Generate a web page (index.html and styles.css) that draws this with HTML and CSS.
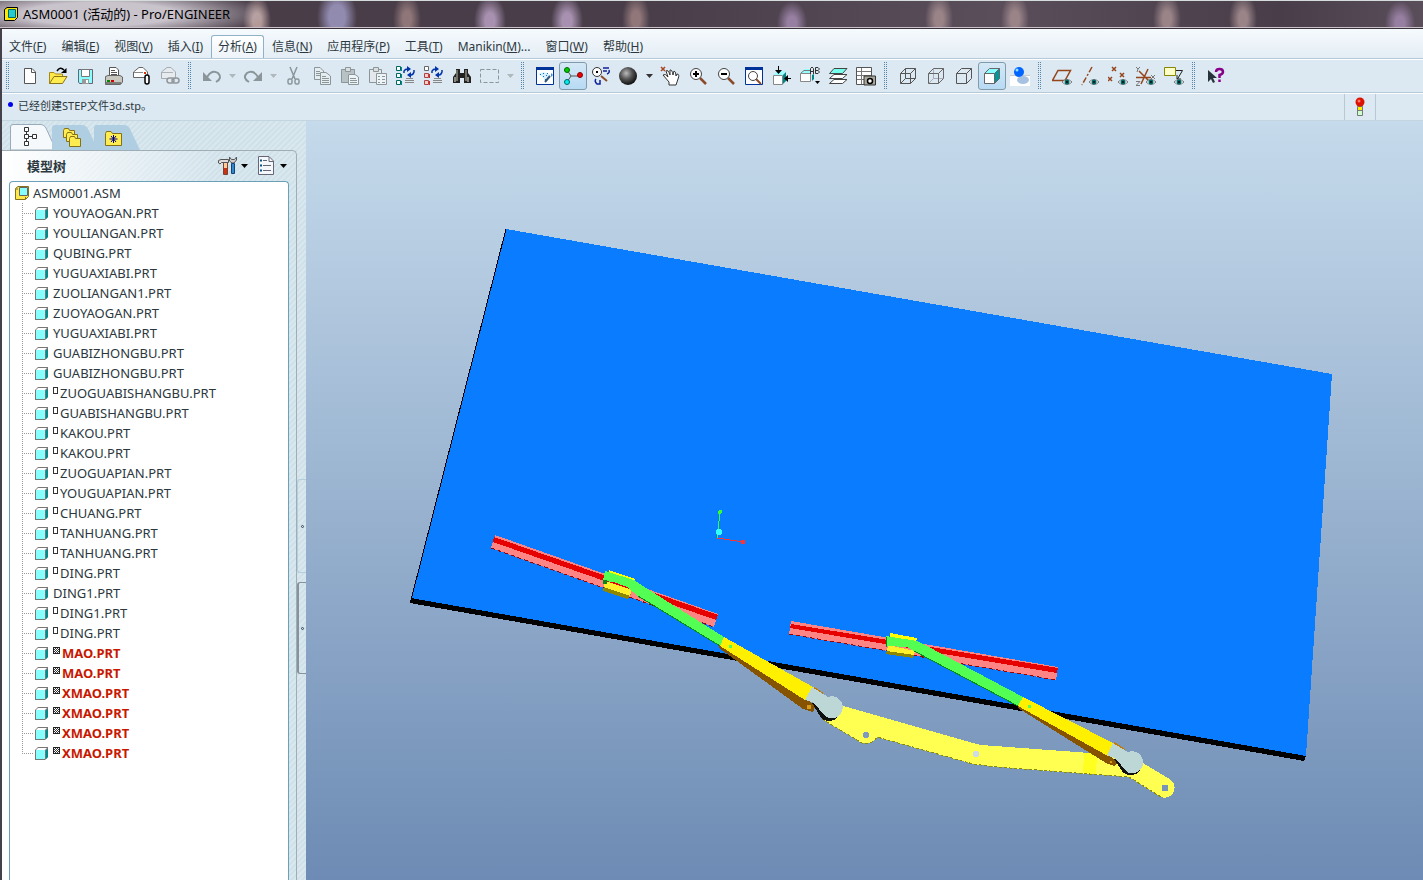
FILE: index.html
```
<!DOCTYPE html>
<html lang="zh-CN">
	<head>
		<meta charset="utf-8">
		<title>ASM0001 (活动的) - Pro/ENGINEER</title>
		<meta name="viewport" content="width=device-width, initial-scale=1.0">

		<link rel="stylesheet" href="styles.css">
	</head>
	<body>

	<!-- shapes used more than once -->
	<svg class="defs" aria-hidden="true">
		<symbol id="part" viewBox="0 0 13 13">
			<path d="M3 0H13V10L10 13H0V3z" fill="#777"/>
			<path d="M3 1H12L10 3H1z" fill="#fff"/>
			<path d="M11 4L13 2V10L11 12z" fill="#008a8a"/>
			<path d="M1 3H10V12H1z" fill="#8ff"/>
		</symbol>
		<symbol id="asm" viewBox="0 0 14 14">
			<path d="M3 .5H13.500V10.500L10.500 13.500H.5V2.500z" fill="#ffe84a" stroke="#86701a"/>
			<path d="M4.500 1.500H12.500V9.500H4.500z" fill="#8ff" stroke="#666"/>
			<path d="M10.500 11V13M1 3H3" stroke="#86701a"/>
		</symbol>
		<symbol id="eye" viewBox="0 0 10 6">
			<path d="M0 3Q5 -2 10 3Q5 8 0 3z" fill="#fff" stroke="#777"/>
			<circle cx="5" cy="3" r="2.500" fill="#066"/><path d="M4 2H6V4H4z" fill="#022"/>
		</symbol>
		<symbol id="lens" viewBox="0 0 20 20">
			<path d="M12 12L18 18" stroke="#8b4a2b" stroke-width="2.500"/>
			<circle cx="8" cy="8" r="5.500" fill="#fff" stroke="#444"/>
		</symbol>
		<symbol id="regen" viewBox="0 0 12 12">
			<path d="M1 7V5Q2 3 5 3" fill="none" stroke="#03a" stroke-width="1.500"/><path d="M4 0L8 3L4 6z" fill="#03a"/>
			<path d="M11 4V6Q10 9 8 9" fill="none" stroke="#03a" stroke-width="1.500"/><path d="M8 6L4 9L8 12z" fill="#03a"/>
		</symbol>
	</svg>

	<header class="titlebar">
		<svg width="14" height="14"><path d="M3 .5H13.500V10.500L10.500 13.500H.5V2.500z" fill="#ffe800" stroke="#000"/><path d="M4.500 2.500H11.500V10.500H4.500z" fill="#2cc" stroke="#066"/></svg>
		<h1>ASM0001 (活动的) - Pro/ENGINEER</h1>
	</header>

	<div class="window">
		<nav class="menubar">
			<button type="button">文件(<u>F</u>)</button>
			<button type="button">编辑(<u>E</u>)</button>
			<button type="button">视图(<u>V</u>)</button>
			<button type="button">插入(<u>I</u>)</button>
			<button type="button" class="active">分析(<u>A</u>)</button>
			<button type="button">信息(<u>N</u>)</button>
			<button type="button">应用程序(<u>P</u>)</button>
			<button type="button">工具(<u>T</u>)</button>
			<button type="button">Manikin(<u>M</u>)...</button>
			<button type="button">窗口(<u>W</u>)</button>
			<button type="button">帮助(<u>H</u>)</button>
		</nav>

		<div class="toolbar">
			<div class="group">
				<button type="button" aria-label="New"><svg><path d="M4.500 2.500H12L15.500 6V17.500H4.500z" fill="#fff" stroke="#555"/><path d="M11.500 2.500V6.500H15.500" fill="none" stroke="#555"/></svg></button>
				<button type="button" aria-label="Open"><svg><path d="M1.500 17.500V6.500H6L7.500 8H14.500V11" fill="#ffe84a" stroke="#a88a10"/><path d="M1.500 17.500L6 10.500H19L14.500 17.500z" fill="#ffec50" stroke="#8a7414"/><path d="M9 5Q12 0 16 4" fill="none" stroke="#000" stroke-width="1.500"/><path d="M18.500 2V7H13z"/></svg></button>
				<button type="button" aria-label="Save"><svg><path d="M2.500 3.500H16.500V17.500H3.500L2.500 16z" fill="#8ff" stroke="#667"/><path d="M5.500 3.500H13.500V10.500H5.500z" fill="#fff" stroke="#777"/><path d="M6 13H13V18H6z" fill="#999"/><path d="M10 14H12V17H10z" fill="#fff"/></svg></button>
				<button type="button" aria-label="Print"><svg><path d="M5.500 10V1.500H12L14.500 4V10" fill="#fff" stroke="#555"/><path d="M7 4.500H11M7 6.500H13M7 8.500H13" stroke="#555"/><path d="M1.500 10.500L4 9.500H16L18.500 11V16L16.500 18.500H1.500z" fill="#c8c8c0" stroke="#666"/><path d="M3 14H6V16H3z" fill="#080"/><path d="M7 14H10V16H7z" fill="#c00"/><path d="M2 17H17" stroke="#333"/></svg></button>
				<button type="button" aria-label="Mail attachment"><svg><path d="M1.500 11.500V6L7 1.500H11L15.500 6V11.500z" fill="#fff" stroke="#666"/><path d="M2 6.500H11" stroke="#888"/><path d="M12 6H14V8H12z" fill="#d30"/><rect x="13" y="9" width="4" height="9" rx="2" fill="#fff" stroke="#000" stroke-width="1.500"/></svg></button>
				<button type="button" aria-label="Mail link"><svg opacity=".55"><path d="M1.500 12.500V6L7 1.500H11L15.500 6V12.500z" fill="#eee" stroke="#777"/><path d="M2 6.500H13" stroke="#888"/><rect x="7" y="12" width="7" height="5" rx="2.500" fill="#eee" stroke="#555" stroke-width="1.500"/><rect x="12" y="12" width="7" height="5" rx="2.500" fill="none" stroke="#555" stroke-width="1.500"/></svg></button>
			</div>

			<div class="group">
				<button type="button" aria-label="Undo"><svg><path d="M5 11Q10 3 16 7Q21 12 14 16" fill="none" stroke="#8b969b" stroke-width="2"/><path d="M1 6V15H10z" fill="#8b969b"/></svg></button>
				<button type="button" class="drop" aria-label="Undo list"><svg viewBox="0 0 7 4"><path d="M0 0H7L3.500 4z" fill="#aeb8bd"/></svg></button>
				<button type="button" aria-label="Redo"><svg><path d="M15 11Q10 3 4 7Q-1 12 6 16" fill="none" stroke="#8b969b" stroke-width="2"/><path d="M19 6V15H10z" fill="#8b969b"/></svg></button>
				<button type="button" class="drop" aria-label="Redo list"><svg viewBox="0 0 7 4"><path d="M0 0H7L3.500 4z" fill="#aeb8bd"/></svg></button>
				<button type="button" aria-label="Cut"><svg fill="none" stroke="#8b969b" stroke-width="1.500"><path d="M6 1L11 13M13 1L8 13"/><rect x="4" y="13" width="4" height="5" rx="1.500"/><rect x="11" y="13" width="4" height="5" rx="1.500"/></svg></button>
				<button type="button" aria-label="Copy"><svg fill="#e6edf1" stroke="#8b969b"><path d="M2.500 1.500H8L11.500 5V13.500H2.500z"/><path d="M4 5.500H8M4 7.500H9M4 9.500H9"/><path d="M8.500 6.500H14L18.500 10V18.500H8.500z"/><path d="M10 10.500H14M10 12.500H17M10 14.500H17M10 16.500H17"/></svg></button>
				<button type="button" aria-label="Paste"><svg stroke="#8b969b"><path d="M1.500 3.500H14.500V16.500H1.500z" fill="#b8c1c5"/><path d="M5.500 1.500H10.500V5.500H5.500z" fill="#ddd"/><path d="M8.500 8.500H15L18.500 11V18.500H8.500z" fill="#eef3f6"/><path d="M10 12.500H16M10 14.500H17M10 16.500H17"/></svg></button>
				<button type="button" aria-label="Paste special"><svg stroke="#8b969b"><path d="M1.500 3.500H13.500V16.500H1.500z" fill="#e2e8eb"/><path d="M5.500 1.500H10.500V5.500H5.500z" fill="#ddd"/><path d="M8.500 7.500H18.500V18.500H8.500z" fill="#eef3f6"/><path d="M10 10.500H12M14 10.500H17M10 13.500H12M14 13.500H17M10 16.500H12M14 16.500H17"/></svg></button>
				<button type="button" aria-label="Regenerate"><svg><path d="M.5 .5H4.500V4.500H.5zM.5 7.500H4.500V11.500H.5zM.5 14.500H4.500V18.500H.5z" fill="#fff" stroke="#066"/><path d="M5.500 1V5M5.500 8V12M5.500 15V19" fill="none" stroke="#088"/><use href="#regen" x="7" y="0" width="12" height="12"/><path d="M10 12.500H17M9 14.500H18M9 16.500H18" stroke="#888"/></svg></button>
				<button type="button" aria-label="Regenerate manager"><svg><path d="M.5 .5H4.500V4.500H.5z" fill="#fff" stroke="#666"/><path d="M.5 7.500H4.500V11.500H.5zM.5 14.500H4.500V18.500H.5z" fill="#fcc" stroke="#a44"/><path d="M5.500 8V12M5.500 15V19" fill="none" stroke="#d22"/><use href="#regen" x="7" y="0" width="12" height="12"/><path d="M10 12.500H17M9 14.500H18M9 16.500H18" stroke="#888"/></svg></button>
				<button type="button" aria-label="Find"><svg><path d="M4 3H8V7H12V3H16V7L19 11V17H12V12H8V17H1V11L4 7z" fill="#222"/><path d="M5 4V15M14 4V15" stroke="#bba"/><path d="M3 11V16M16 11V16" stroke="#eed"/></svg></button>
				<button type="button" aria-label="Select"><svg><path d="M.5 3.500H18.500V16.500H.5z" fill="none" stroke="#8b969b" stroke-dasharray="4 2"/></svg></button>
				<button type="button" class="drop" aria-label="Select list"><svg viewBox="0 0 7 4"><path d="M0 0H7L3.500 4z" fill="#aeb8bd"/></svg></button>
			</div>

			<div class="group">
				<button type="button" aria-label="Repaint"><svg><path d="M1.500 1.500H18.500V18.500H1.500z" fill="#fff" stroke="#039"/><path d="M1 1H19V4H1z" fill="#039"/><path d="M3 8Q9 4 15 9L10 15Q8 10 3 8z" fill="#d5efff"/><path d="M5 8.500H6M8 7.500H9M8 10.500H9M11 9.500H12M10 13.500H11M12 7.500H13" stroke="#07c"/><path d="M15 10L10 16" stroke="#357" stroke-width="2"/><path d="M16 7L18 9L16 11z" fill="#48c"/></svg></button>
				<button type="button" class="pressed" aria-label="Spin center"><svg><path d="M4 4L8 10H16M8 10L4 16" fill="none" stroke="#555"/><circle cx="4" cy="4" r="2.500" fill="#0c0" stroke="#060"/><circle cx="17" cy="9" r="2.500" fill="#e00" stroke="#800"/><circle cx="4" cy="16" r="2.500" fill="#0ee" stroke="#066"/></svg></button>
				<button type="button" aria-label="Orient mode"><svg><path d="M10 10L16 15" stroke="#8b4a2b" stroke-width="2"/><circle cx="6" cy="6" r="4.500" fill="#fff" stroke="#333"/><path d="M5 6H7" stroke="#000" stroke-width="2"/><path d="M12 2H18M12 5H16M16 8Q19 7 18 4M5 13Q3 15 6 18H9V14" fill="none" stroke="#129" stroke-width="1.500"/></svg></button>
				<button type="button" aria-label="Appearance"><svg><defs><radialGradient id="ball" cx=".4" cy=".35" r=".65"><stop offset="0" stop-color="#bbb"/><stop offset=".5" stop-color="#555"/><stop offset="1" stop-color="#111"/></radialGradient></defs><circle cx="9" cy="10" r="9" fill="url(#ball)"/></svg></button>
				<button type="button" class="drop" aria-label="Appearance list"><svg viewBox="0 0 7 4"><path d="M0 0H7L3.500 4z" fill="#333"/></svg></button>
				<button type="button" aria-label="Pan"><svg><path d="M1 1L5 5M5 1L1 5" stroke="#a42" stroke-width="1.500"/><path d="M9 19V16L3 9Q5 7 8 11L6 5Q8 3 10 9V4Q12 3 13 9L14 5Q16 5 16 10L17 8Q20 8 18 13L16 19z" fill="#fff" stroke="#333"/></svg></button>
				<button type="button" aria-label="Zoom in"><svg><use href="#lens"/><path d="M5 8H11M8 5V11" stroke="#000" stroke-width="2"/></svg></button>
				<button type="button" aria-label="Zoom out"><svg><use href="#lens"/><path d="M5 8H11" stroke="#000" stroke-width="2"/></svg></button>
				<button type="button" aria-label="Refit"><svg><path d="M1.500 1.500H18.500V18.500H1.500z" fill="#fff" stroke="#039"/><path d="M1 1H19V4H1z" fill="#039"/><path d="M12 13L17 18" stroke="#8b4a2b" stroke-width="2"/><circle cx="9" cy="10" r="4.500" fill="#fff" stroke="#444"/></svg></button>
				<button type="button" aria-label="Reorient"><svg><path d="M1 9L5 5H14L11 9z" fill="#9ff"/><path d="M11 9L14 6V15L11 18z" fill="#088"/><path d="M1.500 9.500H10.500V18.500H1.500z" fill="#fff" stroke="#888"/><path d="M6.500 0V6M19 12.500H14" stroke="#000" fill="none"/><path d="M3 4H10L6.500 8zM16 9V16L12 12.500z"/></svg></button>
				<button type="button" aria-label="Saved views"><svg><path d="M0 7L4 3H10V7z" fill="#9ff"/><path d="M.5 7.500L4 4.500H10" fill="none" stroke="#777"/><path d="M.5 7.500H10.500V15.500H.5z" fill="#fff" stroke="#888"/><path d="M12 9L14 8V13L12 15z" fill="#088"/><path d="M10.500 8V2.500L12 1L13.500 2.500V8M10.500 5.500H13.500M15.500 1.500V7.500H18L19.500 6L18 4.500L19.500 3L18 1.500zM15.500 4.500H18" fill="none" stroke="#333"/><path d="M15 15H20L17.500 18z"/></svg></button>
				<button type="button" aria-label="Layers"><svg fill="#fff" stroke="#444"><path d="M1.500 17.500L6 13.500H19L14.500 17.500z"/><path d="M1.500 12.500L6 8.500H19L14.500 12.500z"/><path d="M1.500 7.500L6 2.500H19L14.500 7.500z" fill="#7fe"/></svg></button>
				<button type="button" aria-label="View manager"><svg><path d="M.5 1.500H15.500V18.500H.5z" fill="#fff" stroke="#555"/><path d="M1 5.500H15M1 9.500H15M1 13.500H15M5.500 2V18" stroke="#777"/><path d="M8 10H19.500V19H8z" fill="#aaa89c" stroke="#333"/><circle cx="14" cy="15" r="2.500" fill="#fff" stroke="#000" stroke-width="1.500"/></svg></button>
			</div>

			<div class="group">
				<button type="button" aria-label="Wireframe"><svg fill="none" stroke="#555"><path d="M2.500 7.500H12.500V17.500H2.500zM7.500 2.500H17.500V12.500H7.500zM2.500 7.500L7.500 2.500M12.500 7.500L17.500 2.500M12.500 17.500L17.500 12.500M2.500 17.500L7.500 12.500"/></svg></button>
				<button type="button" aria-label="Hidden line"><svg fill="none" stroke="#666"><path d="M7.500 3V12.500H17M2.500 17.500L7.500 12.500" stroke="#aab"/><path d="M2.500 7.500H12.500V17.500H2.500zM2.500 7.500L7.500 2.500H17.500V12.500L12.500 17.500M12.500 7.500L17.500 2.500"/></svg></button>
				<button type="button" aria-label="No hidden"><svg fill="none" stroke="#555"><path d="M2.500 7.500H12.500V17.500H2.500zM2.500 7.500L7.500 2.500H17.500V12.500L12.500 17.500M12.500 7.500L17.500 2.500"/></svg></button>
				<button type="button" class="pressed" aria-label="Shading"><svg stroke="#666"><path d="M2.500 7.500L7.500 2.500H17.500L12.500 7.500z" fill="#8ff"/><path d="M12.500 7.500L17.500 2.500V12.500L12.500 17.500z" fill="#099"/><path d="M2.500 7.500H12.500V17.500H2.500z" fill="#fff"/></svg></button>
				<button type="button" aria-label="Enhanced realism"><svg><path d="M0 9H20V20H0z" fill="#fff"/><ellipse cx="13" cy="14" rx="6" ry="4" fill="#a7c1e2"/><path d="M0 9.500H20" stroke="#ccc"/><circle cx="9" cy="6" r="5" fill="#06f"/><circle cx="7" cy="4" r="1.500" fill="#9df"/></svg></button>
			</div>

			<div class="group">
				<button type="button" aria-label="Plane display"><svg><path d="M.5 14.500L6 4.500H18.500L13 14.500z" fill="none" stroke="#95451c" stroke-width="1.500"/><use href="#eye" x="10" y="13" width="10" height="6"/></svg></button>
				<button type="button" aria-label="Axis display"><svg><path d="M12 1L2 19" fill="none" stroke="#95451c" stroke-width="1.500" stroke-dasharray="6 2 2 2"/><use href="#eye" x="9" y="13" width="10" height="6"/></svg></button>
				<button type="button" aria-label="Point display"><svg><path d="M4 1L8 5M8 1L4 5M12 7L16 11M16 7L12 11M0 11L4 15M4 11L0 15" stroke="#95451c" stroke-width="1.500"/><use href="#eye" x="10" y="13" width="10" height="6"/></svg></button>
				<button type="button" aria-label="Csys display"><svg><path d="M0 11.500H15M3 5L15 17M12 3L5 18" stroke="#95451c" stroke-width="1.500"/><path d="M0 1L2 3L4 1M2 3L1 6M15 9L19 13M19 9L15 13M0 15.500H4L0 19.500H4" fill="none" stroke="#777"/><use href="#eye" x="10" y="13" width="10" height="6"/></svg></button>
				<button type="button" aria-label="Annotation display"><svg><path d="M.5 1.500H11.500V9.500H.5z" fill="#ffc" stroke="#880"/><path d="M12 4.500H18.500L13.500 13M13 9V13H17" fill="none" stroke="#222"/><use href="#eye" x="10" y="13" width="10" height="6"/></svg></button>
			</div>

			<div class="group">
				<button type="button" aria-label="What's this"><svg><path d="M2 4V16L5 13L7 17L9 16L7 12H11z" fill="#27323c"/><path d="M10 6Q10 3 13.500 3Q17 3 17 6Q17 8 13.500 9V12M13.500 13.500V16" fill="none" stroke="#808" stroke-width="2.500"/></svg></button>
			</div>
		</div>

		<div class="status">
			<p>已经创建STEP文件3d.stp。</p>
			<div class="light">
				<svg width="10" height="20"><path d="M2.500 9.500H7.500V18.500H2.500z" fill="#cfc" stroke="#777"/><path d="M3 10H7V13H3z" fill="#fe0"/><path d="M3 13.500H7" stroke="#777"/><circle cx="5" cy="5" r="4.500" fill="#d10"/><circle cx="4" cy="4" r="1.500" fill="#f76"/></svg>
			</div>
		</div>

		<main class="workspace">
			<aside class="sidebar">
				<div class="navigator">
					<div class="tabs">
						<button type="button" aria-label="Model tree"><svg width="46" height="26"><path d="M.5 26V3Q.5 .5 3 .5H31Q34 .5 36 4L46 26z" fill="#f5f9fb" stroke="#9ab"/><g fill="#fff" stroke="#333"><path d="M16.500 8V18M18 12.500H23" fill="none"/><path d="M14.500 3.500H18.500V7.500H14.500zM14.500 10.500H18.500V14.500H14.500zM14.500 17.500H18.500V21.500H14.500zM22.500 10.500H26.500V14.500H22.500z"/></g></svg></button>
						<button type="button" aria-label="Folders"><svg width="46" height="25"><path d="M0 25V3Q0 0 3 0H30Q34 0 36 4L46 25z" fill="#afcee1"/><g fill="#ffec50" stroke="#86701a"><path d="M11.500 12.500V5.500L12.500 3.500H16.500L17.500 5.500H22.500V12.500z"/><path d="M14.500 16.500V9.500L15.500 7.500H19.500L20.500 9.500H25.500V16.500z"/><path d="M17.500 21.500V13.500L18.500 11.500H22.500L23.500 13.500H28.500V21.500z"/></g></svg></button>
						<button type="button" aria-label="Favorites"><svg width="46" height="25"><path d="M0 25V3Q0 0 3 0H30Q34 0 36 4L46 25z" fill="#afcee1"/><path d="M11.500 20.500V8.500L12.500 6.500H17L18.500 8.500H27.500V20.500z" fill="#ffec50" stroke="#86701a"/><path d="M19.500 10V18M15.500 14H23.500M17 11L22 17M22 11L17 17" stroke="#008"/></svg></button>
					</div>
					<section class="panel">
						<div class="panel-head">
							<h2>模型树</h2>
							<button type="button" aria-label="Settings"><svg width="30" height="20"><path d="M.5 7V4.500L3 3.500H10.500V6.500H3.500L2 8z" fill="#ddd" stroke="#555"/><path d="M6 7H9V13H6z" fill="#fc9"/><path d="M6 12H9V18H6z" fill="#c31"/><path d="M5.500 7V18.500H9.500V7" fill="none" stroke="#743"/><path d="M11.500 1V5L14 7H16L18.500 4V1L16.500 3.500H13.500z" fill="#ccc" stroke="#555"/><path d="M13.500 7.500H16.500V17.500H13.500z" fill="#38c" stroke="#147"/><path d="M23 8H30L26.500 12z"/></svg></button>
							<button type="button" aria-label="Show"><svg width="30" height="20"><path d="M1.500 .5H12L16.500 5V18.500H1.500z" fill="#f4f8fd" stroke="#667"/><path d="M12 1V5.500H16" fill="none" stroke="#667"/><path d="M6 4.500H10M6 9.500H14M6 14.500H14" stroke="#667"/><path d="M3 4.500H5M3 9.500H5M3 14.500H5" stroke="#058" stroke-width="2"/><path d="M23 8H30L26.500 12z"/></svg></button>
						</div>
						<div class="tree">
							<p class="root"><svg><use href="#asm"/></svg>ASM0001.ASM</p>
							<ul>
								<li><svg><use href="#part"/></svg>YOUYAOGAN.PRT</li>
								<li><svg><use href="#part"/></svg>YOULIANGAN.PRT</li>
								<li><svg><use href="#part"/></svg>QUBING.PRT</li>
								<li><svg><use href="#part"/></svg>YUGUAXIABI.PRT</li>
								<li><svg><use href="#part"/></svg>ZUOLIANGAN1.PRT</li>
								<li><svg><use href="#part"/></svg>ZUOYAOGAN.PRT</li>
								<li><svg><use href="#part"/></svg>YUGUAXIABI.PRT</li>
								<li><svg><use href="#part"/></svg>GUABIZHONGBU.PRT</li>
								<li><svg><use href="#part"/></svg>GUABIZHONGBU.PRT</li>
								<li><svg><use href="#part"/></svg><span class="packed">ZUOGUABISHANGBU.PRT</span></li>
								<li><svg><use href="#part"/></svg><span class="packed">GUABISHANGBU.PRT</span></li>
								<li><svg><use href="#part"/></svg><span class="packed">KAKOU.PRT</span></li>
								<li><svg><use href="#part"/></svg><span class="packed">KAKOU.PRT</span></li>
								<li><svg><use href="#part"/></svg><span class="packed">ZUOGUAPIAN.PRT</span></li>
								<li><svg><use href="#part"/></svg><span class="packed">YOUGUAPIAN.PRT</span></li>
								<li><svg><use href="#part"/></svg><span class="packed">CHUANG.PRT</span></li>
								<li><svg><use href="#part"/></svg><span class="packed">TANHUANG.PRT</span></li>
								<li><svg><use href="#part"/></svg><span class="packed">TANHUANG.PRT</span></li>
								<li><svg><use href="#part"/></svg><span class="packed">DING.PRT</span></li>
								<li><svg><use href="#part"/></svg>DING1.PRT</li>
								<li><svg><use href="#part"/></svg><span class="packed">DING1.PRT</span></li>
								<li><svg><use href="#part"/></svg><span class="packed">DING.PRT</span></li>
								<li><svg><use href="#part"/></svg><span class="failed">MAO.PRT</span></li>
								<li><svg><use href="#part"/></svg><span class="failed">MAO.PRT</span></li>
								<li><svg><use href="#part"/></svg><span class="failed">XMAO.PRT</span></li>
								<li><svg><use href="#part"/></svg><span class="failed">XMAO.PRT</span></li>
								<li><svg><use href="#part"/></svg><span class="failed">XMAO.PRT</span></li>
								<li><svg><use href="#part"/></svg><span class="failed">XMAO.PRT</span></li>
							</ul>
						</div>
					</section>
				</div>
				<div class="rail">
					<button type="button" aria-label="Collapse navigator"></button>
					<button type="button" class="dark" aria-label="Collapse browser"></button>
				</div>
			</aside>

			<div class="viewport">
				<svg viewBox="306 122 1117 758" preserveAspectRatio="xMinYMin meet" shape-rendering="crispEdges" role="img" aria-label="Wiper assembly">
					<!-- windscreen -->
					<path d="M506 230L1332 375L1306 757L411 600z" fill="#0a7cff"/>
					<path d="M506 230L411 601" stroke="#000"/>
					<path d="M411 599L1306 757L1304 762L410 604z"/>

					<!-- linkage -->
					<path d="M840 706L973 744L981 746L1090 754L1110 756L1143 764L1171 781A10 10 0 0 1 1161 798L1129 778L997 768L973 765L877 738Q873 746 862 744L822 720V706z" fill="#ffff52"/>
					<path d="M822 720L862 744Q873 746 877 738L973 765L997 768L1129 778L1161 798" fill="none" stroke="#8b8b00" stroke-dasharray="3 2"/>
					<path d="M1084 754L1097 755L1096 775L1083 774z" fill="#ffff20"/>
					<circle cx="866" cy="736" r="3" fill="#7f9abf"/>
					<circle cx="976" cy="755" r="3" fill="#ccdbe8"/>
					<circle cx="1165" cy="789" r="3.500" fill="#7793ba"/>

					<!-- left wiper -->
					<path d="M495 536L718 615L714 628L491 549z" fill="#ff8484"/>
					<path d="M494 538L718 616L716 621L493 543z" fill="#e60000"/>
					<path d="M491 549L714 628" stroke="#900" stroke-dasharray="4 3"/>
					<path d="M609 571L635 580L634 586L609 578z" fill="#ff0"/>
					<path d="M604 586L631 595L628 600L603 592z" fill="#8c8600"/>
					<path d="M605 582L632 591L630 597L604 588z" fill="#fff02a"/>
					<path d="M605 572L634 581L646 589L724 638L720 647L638 597L627 588L614 583L603 582z" fill="#52ff52"/>
					<path d="M638 597L720 647M603 581H606V584H603z" stroke="#008a1a" fill="#008a1a"/>
					<path d="M719 646L805 700L816 706L813 713L803 710L719 649z" fill="#865300"/>
					<path d="M724 638L813 688L823 695L805 701L720 647z" fill="#fff000"/>
					<path d="M814 689L823 695" stroke="#c27a00" stroke-width="2"/>
					<circle cx="809" cy="708" r="3" fill="#d49b1c" stroke="#865300"/>
					<path d="M729 646H732V649H729z" fill="#52ff52"/>
					<path d="M812 704L821 703L840 713A11 11 0 0 1 820 717z" fill="#101010"/>
					<path d="M812 688L828 698A11 11 0 1 1 825 717L814 704L805 701z" fill="#bdd6d6"/>

					<!-- right wiper -->
					<path d="M791 622L1058 668L1056 681L789 635z" fill="#ff8484"/>
					<path d="M791 625L1058 669L1057 674L790 629z" fill="#e60000"/>
					<path d="M789 635L1056 681" stroke="#900" stroke-dasharray="4 3"/>
					<path d="M890 634L917 639L916 644L890 639z" fill="#ff0"/>
					<path d="M887 651L914 655L913 659L886 655z" fill="#8c8600"/>
					<path d="M888 646L915 652L914 656L887 652z" fill="#fff02a"/>
					<path d="M886 637L917 642L927 647L1023 698L1018 707L914 652L907 648L886 647z" fill="#52ff52"/>
					<path d="M914 652L1018 707M886 638V648" stroke="#008a1a"/>
					<path d="M1018 706L1108 756L1118 763L1114 767L1106 764L1018 709z" fill="#865300"/>
					<path d="M1023 698L1113 744L1125 751L1108 757L1018 707z" fill="#fff000"/>
					<path d="M1114 744L1125 751" stroke="#c27a00" stroke-width="2"/>
					<circle cx="1111" cy="763" r="2" fill="#d49b1c" stroke="#865300"/>
					<path d="M1028 706H1031V709H1028z" fill="#52ff52"/>
					<path d="M1114 760L1123 758L1141 769A11 11 0 0 1 1122 772z" fill="#101010"/>
					<path d="M1113 744L1128 753A11 11 0 1 1 1127 773L1116 760L1107 756z" fill="#bdd6d6"/>

					<!-- spin center -->
					<path d="M720 514L718 530M717 535V539" stroke="#3f3" fill="none"/>
					<path d="M717 539L743 543" stroke="#f33"/>
					<circle cx="720" cy="513" r="2" fill="#3f3"/>
					<circle cx="743" cy="543" r="2.500" fill="#f33"/>
					<circle cx="719" cy="533" r="3" fill="#3ff"/>
				</svg>
			</div>
		</main>
	</div>

</body>
</html>
```
FILE: styles.css
```
html, body { height: 100%; }
body {
	margin: 0;
	display: flex;
	flex-direction: column;
	overflow: hidden;
	color: #2c3840;
	font-family: "Noto Sans", "Noto Sans CJK SC", sans-serif;
	font-size: 12px;
}
h1, h2, p, ul { margin: 0; padding: 0; font-size: inherit; font-weight: normal; }
ul { list-style: none; }
button {
	margin: 0;
	padding: 0;
	border: 0;
	background: none;
	color: inherit;
	font: inherit;
}
svg { display: block; }
.defs { position: absolute; width: 0; height: 0; }

.titlebar {
	flex: none;
	box-sizing: border-box;
	height: 28px;
	padding-left: 4px;
	display: flex;
	align-items: center;
	gap: 5px;
	border-top: 1px solid #d5dcdc;
	border-bottom: 1px solid #c9c2c9;
	color: #000;
	font-size: 13px;
	line-height: 20px;
	background:
		radial-gradient(ellipse 170px 26px at 100px 13px, #c9c3cc 45%, transparent),
		radial-gradient(ellipse 14px 26px at 257px 20px, #b39a99 30%, transparent),
		radial-gradient(ellipse 20px 30px at 337px 16px, #928bb0 40%, transparent),
		radial-gradient(ellipse 14px 26px at 407px 18px, #8f7678 30%, transparent),
		radial-gradient(ellipse 16px 26px at 490px 20px, #a891b0 30%, transparent),
		radial-gradient(ellipse 16px 26px at 567px 20px, #a891b0 30%, transparent),
		radial-gradient(ellipse 14px 26px at 636px 18px, #917779 30%, transparent),
		radial-gradient(ellipse 15px 22px at 792px 22px, #977fa2 30%, transparent),
		radial-gradient(ellipse 14px 26px at 939px 18px, #9a8488 30%, transparent),
		radial-gradient(ellipse 14px 26px at 1015px 18px, #9a8488 30%, transparent),
		radial-gradient(ellipse 14px 26px at 1167px 18px, #9a8488 30%, transparent),
		radial-gradient(ellipse 14px 26px at 1243px 18px, #9a8488 30%, transparent),
		radial-gradient(ellipse 15px 22px at 1400px 22px, #977fa2 30%, transparent),
		linear-gradient(90deg, #4a3d48, #483d49 45%, #5b4e5b 70%, #483d49 90%, #5b4e5b);
}

.window {
	flex: 1;
	min-height: 0;
	display: flex;
	flex-direction: column;
	border-left: 2px solid #45414b;
	border-top: 1px solid #3a303b;
	background: #dce9f2;
}

.menubar {
	flex: none;
	box-sizing: border-box;
	height: 30px;
	padding-top: 6px;
	display: flex;
	gap: 1px;
	border-bottom: 1px solid #b4cad8;
	background: linear-gradient(#f5fafd, #e4edf5);
}
.menubar button { padding: 0 6px 2px; border: 1px solid transparent; border-bottom: 0; white-space: nowrap; }
.menubar .active {
	border-color: #8fb2c6;
	border-radius: 3px 3px 0 0;
	background: linear-gradient(#fff, #edf4f9);
}

.toolbar {
	flex: none;
	height: 31px;
	padding: 0 0 1px 4px;
	display: flex;
	align-items: center;
	gap: 4px;
	border-top: 1px solid #fff;
	border-bottom: 1px solid #b4cad8;
}
.group { display: flex; align-items: center; }
.group::before {
	content: "";
	width: 3px;
	height: 27px;
	margin-right: 7px;
	background: repeating-linear-gradient(transparent 0 1px, #dce9f2 1px 2px), linear-gradient(90deg, #5687a8 1px, transparent 1px 2px, #5687a8 2px);
}
.group button { box-sizing: border-box; width: 28px; height: 28px; padding: 4px; }
.group svg { width: 20px; height: 20px; }
.group .drop { width: 13px; padding: 3px; }
.group .drop svg { width: 7px; height: 4px; }
.group .pressed {
	padding: 3px;
	border: 1px solid #829bab;
	border-radius: 3px;
	background: linear-gradient(#d5e8f6, #b7daf4);
}

.status {
	flex: none;
	height: 26px;
	display: flex;
	align-items: stretch;
	justify-content: space-between;
	border-top: 1px solid #fff;
	border-bottom: 1px solid #c3d5e1;
}
.status p { padding-left: 6px; display: flex; align-items: center; gap: 5px; height: 21px; font-size: 11px; }
.status p::before { content: ""; width: 5px; height: 5px; border-radius: 50%; background: #00e; }
.light {
	width: 30px;
	margin-right: 47px;
	display: flex;
	align-items: center;
	justify-content: center;
	border-left: 1px solid #b8c9d4;
	border-right: 1px solid #b8c9d4;
}

.workspace { flex: 1; min-height: 0; display: flex; }

.sidebar {
	flex: none;
	width: 304px;
	display: flex;
	background: repeating-linear-gradient(135deg, #d0e1ea 0 2px, #d9e7ee 2px 4px);
}
.navigator { flex: 1; display: flex; flex-direction: column; padding-top: 4px; }
.tabs { flex: none; display: flex; align-items: flex-end; padding-left: 8px; height: 25px; }
.tabs button { margin-right: -4px; }

.panel {
	flex: 1;
	min-height: 0;
	display: flex;
	flex-direction: column;
	padding-right: 7px;
	border: 1px solid #a0adb5;
	border-left: 0;
	border-bottom: 0;
	border-radius: 0 5px 0 0;
	background: linear-gradient(90deg, #fff, rgba(255, 255, 255, 0) 75%);
}
.panel-head { flex: none; height: 30px; display: flex; align-items: center; gap: 9px; padding: 0 2px 0 25px; }
.panel-head h2 { flex: 1; padding-bottom: 2px; font-size: 13px; font-weight: bold; }

.tree {
	flex: 1;
	min-height: 0;
	margin-left: 7px;
	overflow: hidden;
	border: 1px solid #6c9fb8;
	border-bottom: 0;
	border-radius: 4px 4px 0 0;
	background: #fff;
	font-size: 13px;
	line-height: 20px;
}
.tree .root { height: 21px; padding-left: 5px; display: flex; align-items: center; gap: 4px; }
.tree .root svg { width: 14px; height: 14px; }

/* dotted branch lines */
.tree li {
	height: 20px;
	margin-left: 12px;
	display: flex;
	align-items: center;
	background:
		repeating-linear-gradient(90deg, #999 0 1px, transparent 1px 2px) 0 10px / 12px 1px no-repeat,
		repeating-linear-gradient(#999 0 1px, transparent 1px 2px) 0 0 / 1px 20px no-repeat;
}
.tree li:last-child { background-size: 12px 1px, 1px 11px; }
.tree li svg { flex: none; width: 13px; height: 13px; margin: 0 5px 0 13px; }

/* state marks in front of the part name */
.packed, .failed { display: flex; align-items: center; }
.packed::before {
	content: "";
	box-sizing: border-box;
	width: 5px;
	height: 7px;
	margin: 0 2px 6px 0;
	border: 1px solid #333;
}
.failed { color: #c81800; font-weight: bold; }
.failed::before {
	content: "";
	box-sizing: border-box;
	width: 7px;
	height: 7px;
	margin: 0 2px 6px 0;
	border: 1px solid #222;
	background: repeating-conic-gradient(#333 0 25%, #fff 0 50%) 0 0 / 2px 2px;
}

.rail { flex: none; width: 9px; padding-top: 358px; display: flex; flex-direction: column; gap: 9px; }
.rail button {
	box-sizing: border-box;
	height: 94px;
	display: flex;
	align-items: center;
	justify-content: center;
	border: 1px solid #b3cedd;
	border-right: 0;
	border-radius: 3px 0 0 3px;
}
.rail button::before { content: ""; width: 1px; height: 1px; border: 1px solid #345; border-radius: 50%; }
.rail .dark { height: 92px; border: 1px solid #84939e; border-right: 0; border-left-width: 2px; }

.viewport { flex: 1; min-width: 0; background: linear-gradient(#c5daeb, #6d8bb4); }
.viewport svg { width: 100%; height: 100%; }
```
